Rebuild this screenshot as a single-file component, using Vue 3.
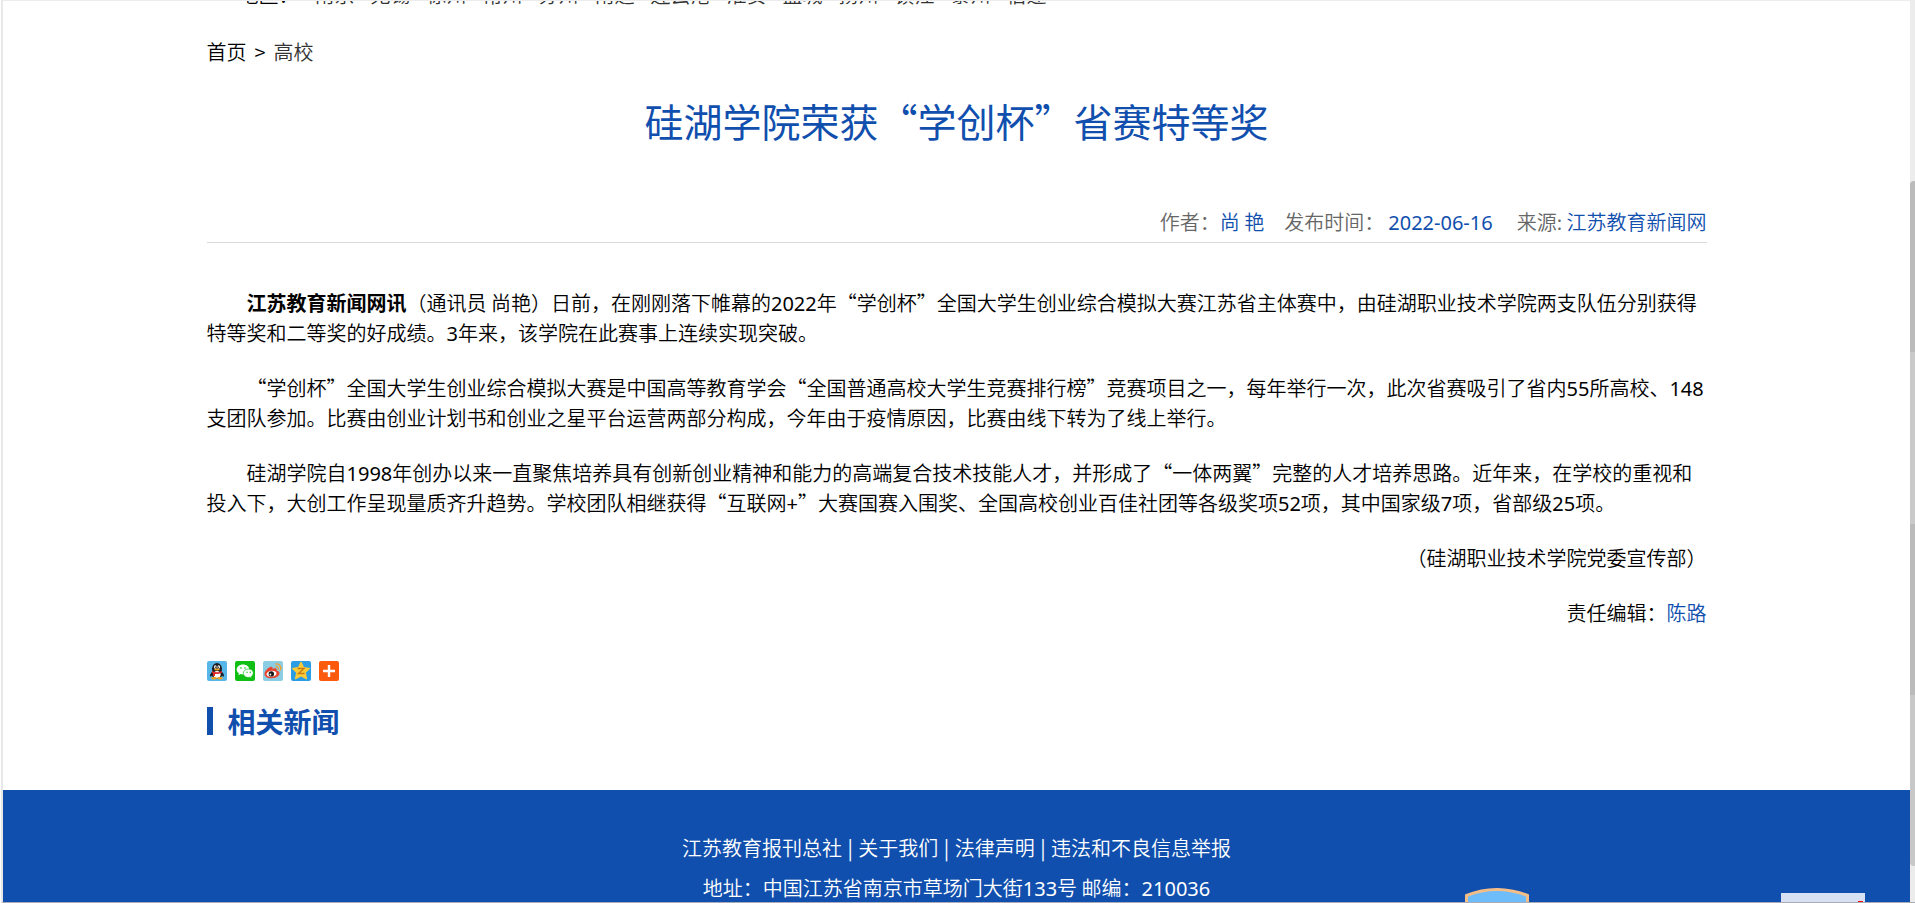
<script setup>
const cities = [
  '南京', '无锡', '徐州', '常州', '苏州', '南通', '连云港',
  '淮安', '盐城', '扬州', '镇江', '泰州', '宿迁'
]

const footerLinks = ['江苏教育报刊总社', '关于我们', '法律声明', '违法和不良信息举报']
</script>

<template>
  <div class="window">
    <div class="page">
      <div class="container">
        <nav class="region">
          <span class="region-label">地区：</span>
          <a v-for="city in cities" :key="city" href="#">{{ city }}</a>
        </nav>

        <nav class="crumbs">
          <a class="home" href="#">首页</a>
          <span>&gt;</span>
          <a href="#">高校</a>
        </nav>

        <main>
          <h1>硅湖学院荣获“学创杯”省赛特等奖</h1>

          <div class="meta">
            <span>作者：<em>尚 艳</em></span>
            <span>发布时间：<em class="num date">2022-06-16</em></span>
            <span>来源: <em>江苏教育新闻网</em></span>
          </div>

          <article>
            <p>
              <strong>江苏教育新闻网讯</strong>（通讯员 尚艳）日前，在刚刚落下帷幕的<span class="num">2022</span>年“学创杯”全国大学生创业综合模拟大赛江苏省主体赛中，由硅湖职业技术学院两支队伍分别获得特等奖和二等奖的好成绩。<span class="num">3</span>年来，该学院在此赛事上连续实现突破。
            </p>
            <p>
              “学创杯”全国大学生创业综合模拟大赛是中国高等教育学会“全国普通高校大学生竞赛排行榜”竞赛项目之一，每年举行一次，此次省赛吸引了省内<span class="num">55</span>所高校、<span class="num">148</span>支团队参加。比赛由创业计划书和创业之星平台运营两部分构成，今年由于疫情原因，比赛由线下转为了线上举行。
            </p>
            <p>
              硅湖学院自<span class="num">1998</span>年创办以来一直聚焦培养具有创新创业精神和能力的高端复合技术技能人才，并形成了“一体两翼”完整的人才培养思路。近年来，在学校的重视和投入下，大创工作呈现量质齐升趋势。学校团队相继获得“互联网<span class="num">+</span>”大赛国赛入围奖、全国高校创业百佳社团等各级奖项<span class="num">52</span>项，其中国家级<span class="num">7</span>项，省部级<span class="num">25</span>项。
            </p>
            <p class="right">（硅湖职业技术学院党委宣传部）</p>
            <p class="right">责任编辑：<em>陈路</em></p>
          </article>

          <div class="share">
            <button type="button" aria-label="QQ">
              <svg viewBox="0 0 20 20">
                <rect width="20" height="20" rx="2" fill="#56b6e7" />
                <path d="M5 11c-2 2-2.500 4-1.600 4.600.6.300 1.200-.8 1.600-1.400l10 0c.4.600 1 1.700 1.600 1.400.9-.6.400-2.600-1.600-4.600z" fill="#1c1c22" />
                <ellipse cx="10" cy="8" rx="5" ry="6" fill="#1c1c22" />
                <ellipse cx="10" cy="13" rx="5.500" ry="4.500" fill="#1c1c22" />
                <ellipse cx="10" cy="13.500" rx="3.600" ry="3.500" fill="#fff" />
                <ellipse cx="8.300" cy="6" rx="1.300" ry="1.700" fill="#fff" />
                <ellipse cx="11.700" cy="6" rx="1.300" ry="1.700" fill="#fff" />
                <circle cx="8.600" cy="6.200" r=".6" fill="#111" />
                <circle cx="11.400" cy="6.200" r=".6" fill="#111" />
                <ellipse cx="10" cy="8.600" rx="2.800" ry="1" fill="#f5a21b" />
                <path d="M5 10q5 2.500 10 0v1.800q-4 1.700-7 1.200v2H6v-2.500l-1-.7z" fill="#e02b2b" />
                <ellipse cx="7" cy="17.300" rx="2.800" ry="1.200" fill="#f5a21b" />
                <ellipse cx="13" cy="17.300" rx="2.800" ry="1.200" fill="#f5a21b" />
              </svg>
            </button>
            <button type="button" aria-label="微信">
              <svg viewBox="0 0 20 20">
                <rect width="20" height="20" rx="2" fill="#0fbf14" />
                <path d="M8 3.500c-3.600 0-6.300 2.200-6.300 5 0 1.600.8 2.900 2.200 3.800l-.6 2 2.300-1.200c4.500 1.300 8.700-1.200 8.700-4.600 0-2.800-2.700-5-6.300-5z" fill="#fff" />
                <path d="M13.500 8c-3 0-5.200 1.900-5.200 4.300 0 2.800 3.200 4.900 6.600 3.900l1.900 1-.5-1.700c3.900-2.700 1.800-7.500-2.800-7.500z" fill="#fff" stroke="#0fbf14" stroke-width=".7" />
                <g fill="#0fbf14">
                  <circle cx="6" cy="7" r=".8" />
                  <circle cx="10" cy="7" r=".8" />
                  <circle cx="12" cy="11.300" r=".7" />
                  <circle cx="15.300" cy="11.300" r=".7" />
                </g>
              </svg>
            </button>
            <button type="button" aria-label="微博">
              <svg viewBox="0 0 20 20">
                <rect width="20" height="20" rx="2" fill="#8ccde4" />
                <path d="M1.500 13c0-3 4.500-7.500 7-7.200 1.200.1 1.200 1.300.9 2 2-1 5-1 4.300 1.600 1.900.5 3 1.500 2.800 3.200-.4 3-4 4.700-8 4.700-3.800 0-7-1.500-7-4.300z" fill="#e6452f" />
                <ellipse cx="8.500" cy="12.800" rx="5" ry="3" fill="#fff" transform="rotate(-7 8.500 12.800)" />
                <circle cx="8.300" cy="12.900" r="2.700" fill="#151515" />
                <circle cx="7.400" cy="13.500" r=".9" fill="#fff" />
                <path d="M13 3c3.600-.5 5.700 2.600 4.500 6M13 5.800c1.800-.3 2.700 1 2.200 2.500" fill="none" stroke="#e8a43a" stroke-width="1.400" stroke-linecap="round" />
              </svg>
            </button>
            <button type="button" aria-label="QQ空间">
              <svg viewBox="0 0 20 20">
                <rect width="20" height="20" rx="2" fill="#2b9de4" />
                <path d="M10 1l2.700 5.600 6.200.8-4.500 4.300 1.200 6.300-5.600-3-5.600 3 1.200-6.300L1.100 7.400l6.200-.8z" fill="#fccc38" stroke="#fccc38" stroke-linejoin="round" />
                <path d="M6.500 7.500h6.500l-5.500 5h6" fill="none" stroke="#c47b13" stroke-width="1.400" />
              </svg>
            </button>
            <button type="button" aria-label="更多">
              <svg viewBox="0 0 20 20">
                <rect width="20" height="20" rx="2" fill="#fc5a0d" />
                <path d="M10 4v12M4 10h12" stroke="#fff" stroke-width="2.400" />
              </svg>
            </button>
          </div>

          <h2>相关新闻</h2>
        </main>
      </div>

      <footer>
        <div>
          <template v-for="(link, i) in footerLinks" :key="link">
            <span v-if="i" class="sep"> | </span>
            <a href="#">{{ link }}</a>
          </template>
        </div>
        <div>地址：中国江苏省南京市草场门大街<span class="num">133</span>号 邮编：<span class="num">210036</span></div>
      </footer>
    </div>

    <div class="scrollbar"><div class="thumb"></div></div>

    <svg class="badge" viewBox="0 0 64 14">
      <path d="M1.500 15V7.500Q32-4.500 62.500 7.500V15" fill="#6fbcfa" stroke="#f2bd87" stroke-width="3" />
    </svg>
    <div class="float-box"><i></i></div>
  </div>
</template>

<style>
body {
  margin: 0;
  background: #fff;
}
</style>

<style scoped>
.window {
  position: relative;
  box-sizing: border-box;
  display: flex;
  height: 100vh;
  overflow: hidden;
  margin-left: 1px;
  border-top: 1px solid #ececec;
  border-left: 2px solid #e8e8e8;
  border-bottom: 1px solid #a9acb8;
  font-family: "Noto Sans CJK SC", sans-serif;
  font-size: 20px;
  font-weight: 350;
  line-height: 30px;
  text-spacing-trim: space-all;
  color: #000;
}

.page {
  flex: 1;
  display: flex;
  flex-direction: column;
}

.container {
  width: 1500px;
  max-width: 100%;
  margin: 0 auto;
}

a {
  color: #333;
  text-decoration: none;
}

em {
  font-style: normal;
  color: #104fae;
}

.num {
  font-family: "Noto Sans", "Noto Sans CJK SC", sans-serif;
  font-weight: 400;
  line-height: 1;
}

.region {
  display: flex;
  align-items: flex-end;
  gap: 16px;
  height: 9px;
  padding-left: 32px;
  overflow: hidden;
}

.crumbs {
  display: flex;
  gap: 8px;
  margin-top: 27px;
}

.crumbs .home {
  color: #000;
}

h1 {
  margin: 24px 0 0;
  font-size: 39px;
  font-weight: 400;
  line-height: 58px;
  text-align: center;
  color: #104fae;
}

.meta {
  display: flex;
  justify-content: flex-end;
  gap: 20px;
  margin-top: 58px;
  padding-bottom: 5px;
  border-bottom: 1px solid #d9d9d9;
  color: #666;
}

.date {
  padding: 0 4px;
}

article {
  margin-top: 45px;
}

article p {
  margin: 0 0 25px;
  text-indent: 2em;
}

article .right {
  text-align: right;
}

.share {
  display: flex;
  gap: 8px;
  margin-top: 33px;
}

.share button {
  display: block;
  width: 20px;
  height: 20px;
  padding: 0;
  border: 0;
  background: none;
  cursor: pointer;
}

.share svg {
  display: block;
}

h2 {
  margin: 26px 0 55px;
  padding-left: 15px;
  border-left: 6px solid #104fae;
  font-size: 28px;
  font-weight: 700;
  line-height: 28px;
  color: #104fae;
}

footer {
  flex: 1;
  padding-top: 38px;
  background: #104fae;
  line-height: 40px;
  text-align: center;
  color: #fff;
}

footer a {
  color: #fff;
}

.sep {
  padding: 0 1px;
  font-weight: 400;
}

.scrollbar {
  width: 5px;
  padding-top: 180px;
  background: #ececec;
}

.thumb {
  height: 685px;
  border-radius: 4px 0 0 4px;
  background: linear-gradient(#bbb 25%, #cacaca 25% 50%, #bbb 50% 75%, #c8c8c8 75%);
}

.badge {
  position: absolute;
  right: 386px;
  bottom: 0;
  width: 64px;
  height: 14px;
}

.float-box {
  position: absolute;
  right: 50px;
  bottom: 0;
  width: 84px;
  height: 9px;
  background: #d8e1f3;
}

.float-box i {
  position: absolute;
  right: 2px;
  bottom: 0;
  width: 5px;
  height: 1px;
  background: #f00;
}
</style>
